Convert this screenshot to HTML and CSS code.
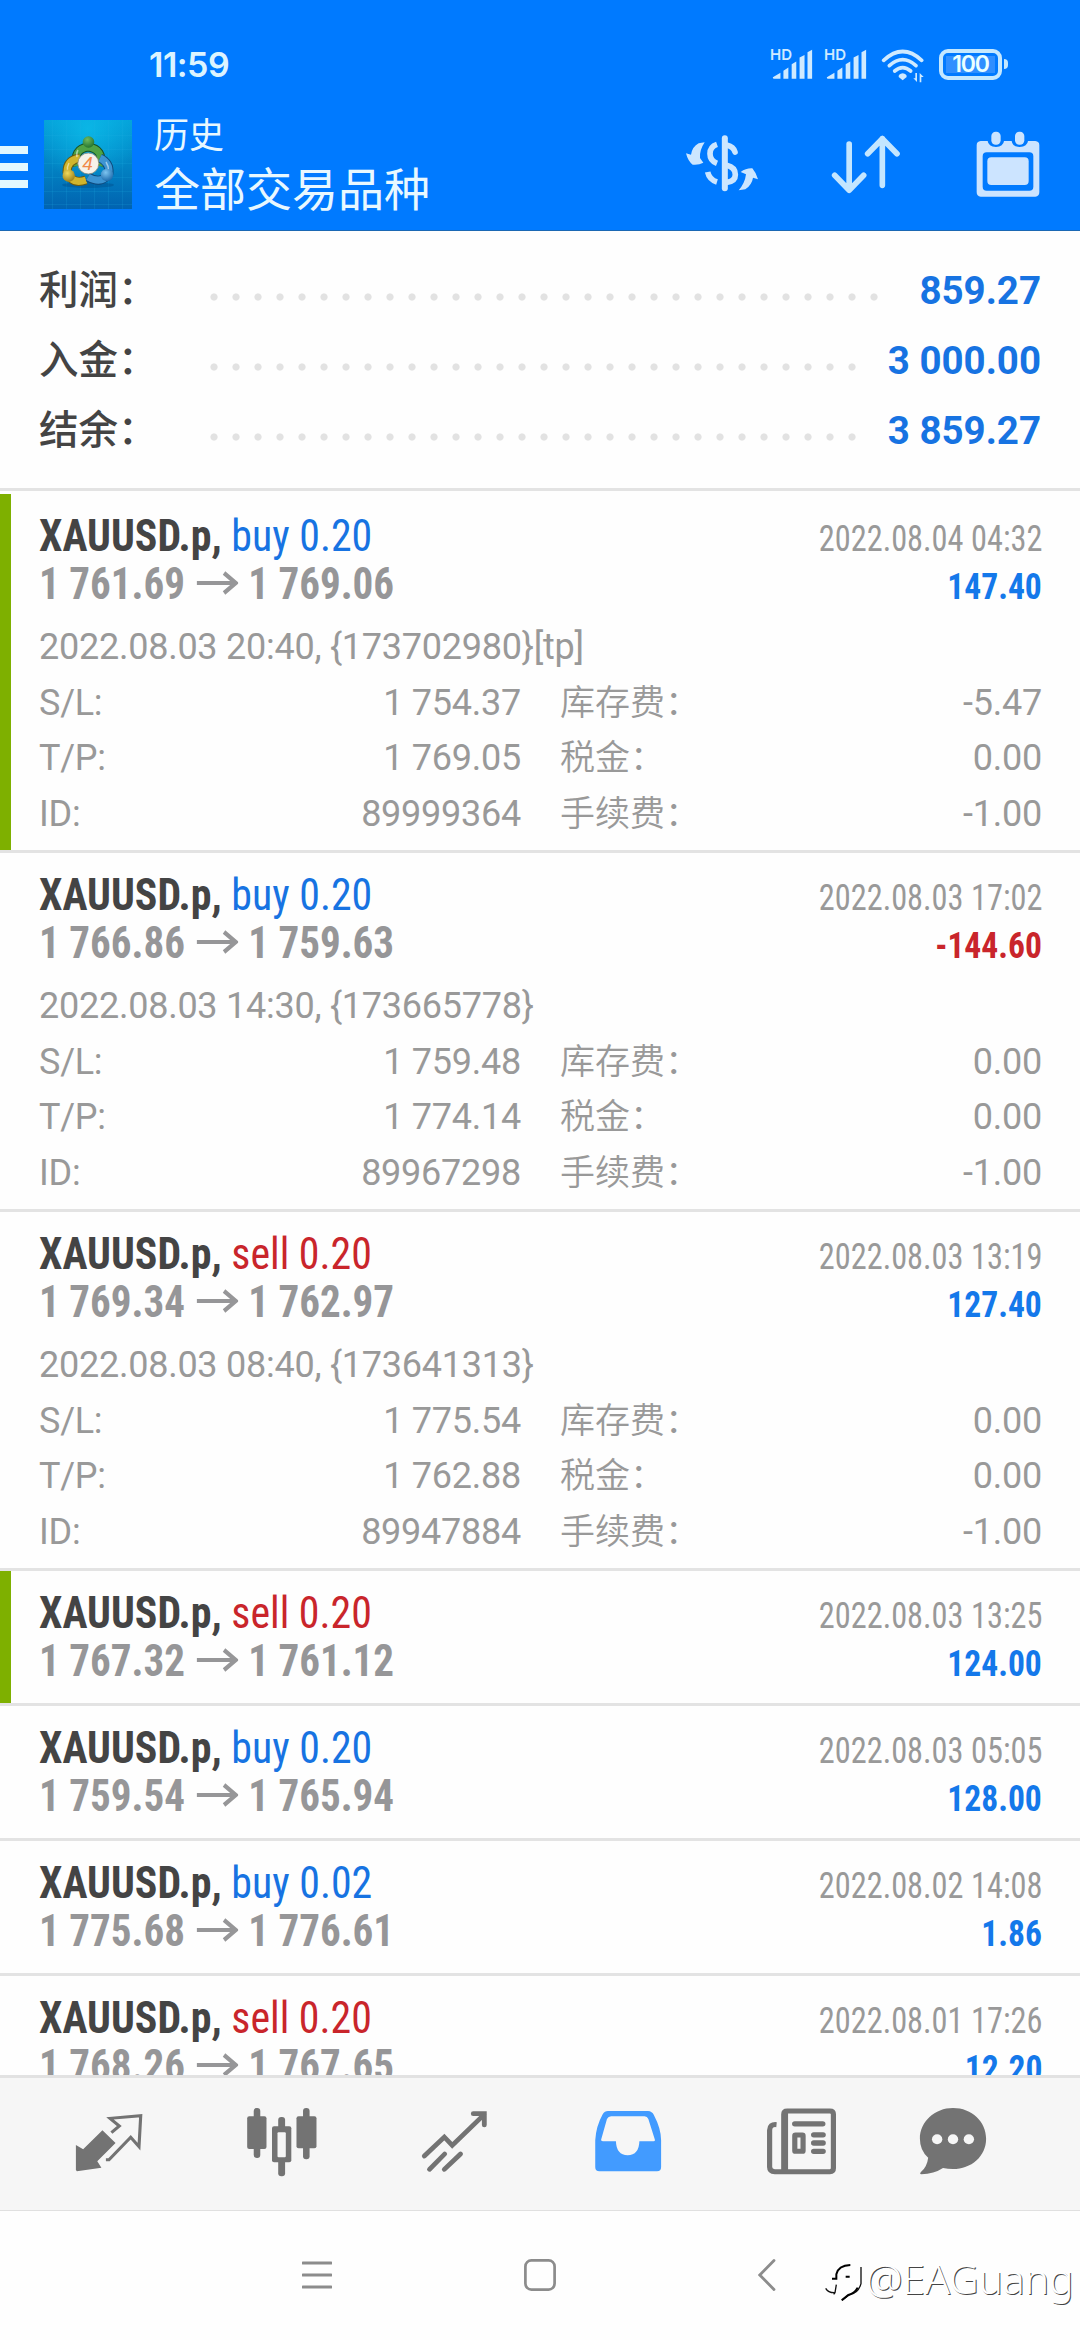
FILE: index.html
```html
<!DOCTYPE html>
<html lang="zh-CN">
<head>
<meta charset="utf-8">
<title>历史</title>
<link rel="stylesheet" href="styles.css">
</head>
<body>
<svg class="defs" width="0" height="0">
  <symbol id="arrow" viewBox="0 0 44 24" preserveAspectRatio="none"><path d="M0 12H41M29 2L41.500 12L29 22" fill="none" stroke="currentColor" stroke-width="4.200"/></symbol>
  <symbol id="signal" viewBox="0 0 126 94">
    <path d="M5 86L28 72V90H8Q4 90 5 86ZM37 66L52 56V90H37ZM62 46L76 38V90H62ZM86 26L101 18V90H86ZM110 10L124 2V90H110Z" fill="#cfeaff"/>
  </symbol>
</svg>
<div class="screen">
  <header class="header">
    <div class="status">
      <span class="clock">11:59</span>
      <div class="status-icons">
        <div class="sim"><span>HD</span><svg width="42" height="31"><use href="#signal"/></svg></div>
        <div class="sim"><span>HD</span><svg width="42" height="31"><use href="#signal"/></svg></div>
        <svg class="wifi" width="44" height="36" viewBox="718 82 132 108">
          <g fill="none" stroke="#cfeaff" stroke-width="11" stroke-linecap="round"><path d="M726 119Q783 66 840 119"/><path d="M743 135Q783 99 823 135"/><path d="M759 151Q783 131 807 151"/></g>
          <path d="M771 169Q770 160 783 158Q796 160 795 169L783 179Z" fill="#cfeaff"/>
          <path d="M826 157V184L815 173H821V157ZM834 185V157L846 169H839V185Z" fill="#cfeaff"/>
        </svg>
        <div class="battery"><span>100</span></div>
      </div>
    </div>
    <div class="toolbar">
      <div class="burger"><i></i><i></i><i></i></div>
      <svg class="logo" width="88" height="89" viewBox="0 0 88 89">
        <defs>
          <linearGradient id="lb" x1="0" y1="0" x2="0" y2="1"><stop offset="0" stop-color="#04a0d8"/><stop offset=".5" stop-color="#0284c4"/><stop offset="1" stop-color="#0163b0"/></linearGradient>
          <radialGradient id="lglow" cx=".5" cy=".1" r=".6"><stop offset="0" stop-color="#0cbcea" stop-opacity=".8"/><stop offset="1" stop-color="#0cbcea" stop-opacity="0"/></radialGradient>
          <radialGradient id="gg" cx=".4" cy=".3" r=".8"><stop offset="0" stop-color="#6fba62"/><stop offset="1" stop-color="#1a6b28"/></radialGradient>
          <radialGradient id="gy" cx=".4" cy=".3" r=".8"><stop offset="0" stop-color="#efd95c"/><stop offset="1" stop-color="#8f7410"/></radialGradient>
          <radialGradient id="gb" cx=".4" cy=".3" r=".8"><stop offset="0" stop-color="#7cc4f0"/><stop offset="1" stop-color="#1260a4"/></radialGradient>
        </defs>
        <rect width="88" height="89" fill="url(#lb)"/><rect width="88" height="89" fill="url(#lglow)"/>
        <path d="M8.500 0V89M22.500 0V89M36.500 0V89M50.500 0V89M64.500 0V89M78.500 0V89M0 15.500H88M0 29.500H88M0 43.500H88M0 57.500H88M0 71.500H88M0 84.500H88" stroke="#27b3e6" stroke-opacity=".16"/>
        <ellipse cx="44" cy="65" rx="26" ry="3" fill="#014a86" opacity=".4"/>
        <g fill="none" stroke-width="9">
          <path d="M33 46Q29 29 44 27Q60 29 56 46" stroke="#194f22"/><path d="M33 46Q29 29 44 27Q60 29 56 46" stroke="#4fa345" stroke-width="7"/>
          <path d="M36 38Q23 40 23 52Q28 65 42 60" stroke="#6c5b10"/><path d="M36 38Q23 40 23 52Q28 65 42 60" stroke="#d0b52d" stroke-width="7"/>
          <path d="M56 38Q66 43 65 53Q58 65 44 57" stroke="#104a7c"/><path d="M56 38Q66 43 65 53Q58 65 44 57" stroke="#3d94d2" stroke-width="7"/>
          <path d="M25 43Q21 50 27 58M34 30Q32 33 33 37M62 42Q68 51 60 60" stroke="#fff" stroke-opacity=".5" stroke-width="1.500"/>
        </g>
        <circle cx="44.500" cy="22" r="5.800" fill="url(#gg)"/><circle cx="24.700" cy="55.700" r="6.200" fill="url(#gy)"/><circle cx="63" cy="55" r="6.200" fill="url(#gb)"/>
        <circle cx="44.300" cy="43.500" r="10.500" fill="#f6f2ea" stroke="#8b8d7c" stroke-width=".8"/>
        <text x="43.500" y="50" text-anchor="middle" class="logo-num">4</text>
      </svg>
      <div class="titles"><div class="t1">历史</div><div class="t2">全部交易品种</div></div>
      <svg class="act-cur" width="76" height="60" viewBox="132 342 228 180">
        <g fill="none" stroke="#cce6ff" stroke-linecap="round"><path d="M254.500 355V505" stroke-width="18"/>
        <g stroke-width="17" stroke-linecap="butt"><path d="M231 373Q210 380 210 401Q210 422 231 430"/><path d="M231 486Q208 479 203 456" /><path d="M262 376Q280 380 285 396" stroke-linecap="round"/><path d="M260 436Q286 442 286 464Q286 484 260 487"/></g></g>
        <path d="M194 367L176 370Q157 380 153 404L138 400Q144 424 158 434Q176 436 190 428L180 414Q178 391 194 367ZM296 511L316 508Q336 494 339 473L354 478Q349 459 337 445Q318 444 302 456L318 463Q315 489 296 511Z" fill="#cce6ff"/>
      </svg>
      <svg class="act-sort" width="72" height="60" viewBox="568 342 216 180"><path d="M625.500 372V510M582 466L625.500 511L669 466M725 496V356M681 401L725 356L769 401" fill="none" stroke="#c4e6ff" stroke-width="17" stroke-linecap="round" stroke-linejoin="round"/></svg>
      <svg class="act-cal" width="66" height="68" viewBox="1005 330 198 204">
        <path fill="#cce4ff" fill-rule="evenodd" d="M1022 363H1043Q1045 380 1068 381Q1090 380 1092 363H1115Q1117 380 1139 381Q1162 380 1164 363H1186Q1198 364 1198 376V516Q1198 529 1186 530H1022Q1010 529 1010 516V376Q1010 364 1022 363ZM1040 397Q1028 397 1028 409V500Q1028 512 1040 512H1168Q1180 512 1180 500V409Q1180 397 1168 397Z"/>
        <rect x="1042" y="412" width="124" height="83" rx="12" fill="#cce4ff"/><rect x="1054" y="335" width="28" height="39" rx="13" fill="#cce4ff"/><rect x="1125" y="335" width="28" height="39" rx="13" fill="#cce4ff"/>
      </svg>
    </div>
  </header>

  <section class="summary">
    <div class="sum"><b>利润：</b><i></i><strong>859.27</strong></div>
    <div class="sum"><b>入金：</b><i></i><strong>3 000.00</strong></div>
    <div class="sum"><b>结余：</b><i></i><strong>3 859.27</strong></div>
  </section>

  <main class="list">
    <article class="deal marked">
      <div class="row"><h3><b>XAUUSD.p, </b><span class="buy">buy 0.20</span></h3><time>2022.08.04 04:32</time></div>
      <div class="row"><div class="price"><span>1 761.69</span><svg><use href="#arrow"/></svg><span>1 769.06</span></div><em class="profit">147.40</em></div>
      <div class="details"><p>2022.08.03 20:40, {173702980}[tp]</p>
        <span>S/L:</span><span>1 754.37</span><span>库存费：</span><span>-5.47</span>
        <span>T/P:</span><span>1 769.05</span><span>税金：</span><span>0.00</span>
        <span>ID:</span><span>89999364</span><span>手续费：</span><span>-1.00</span></div>
    </article>
    <article class="deal">
      <div class="row"><h3><b>XAUUSD.p, </b><span class="buy">buy 0.20</span></h3><time>2022.08.03 17:02</time></div>
      <div class="row"><div class="price"><span>1 766.86</span><svg><use href="#arrow"/></svg><span>1 759.63</span></div><em class="profit loss">-144.60</em></div>
      <div class="details"><p>2022.08.03 14:30, {173665778}</p>
        <span>S/L:</span><span>1 759.48</span><span>库存费：</span><span>0.00</span>
        <span>T/P:</span><span>1 774.14</span><span>税金：</span><span>0.00</span>
        <span>ID:</span><span>89967298</span><span>手续费：</span><span>-1.00</span></div>
    </article>
    <article class="deal">
      <div class="row"><h3><b>XAUUSD.p, </b><span class="sell">sell 0.20</span></h3><time>2022.08.03 13:19</time></div>
      <div class="row"><div class="price"><span>1 769.34</span><svg><use href="#arrow"/></svg><span>1 762.97</span></div><em class="profit">127.40</em></div>
      <div class="details"><p>2022.08.03 08:40, {173641313}</p>
        <span>S/L:</span><span>1 775.54</span><span>库存费：</span><span>0.00</span>
        <span>T/P:</span><span>1 762.88</span><span>税金：</span><span>0.00</span>
        <span>ID:</span><span>89947884</span><span>手续费：</span><span>-1.00</span></div>
    </article>
    <article class="deal marked">
      <div class="row"><h3><b>XAUUSD.p, </b><span class="sell">sell 0.20</span></h3><time>2022.08.03 13:25</time></div>
      <div class="row"><div class="price"><span>1 767.32</span><svg><use href="#arrow"/></svg><span>1 761.12</span></div><em class="profit">124.00</em></div>
    </article>
    <article class="deal">
      <div class="row"><h3><b>XAUUSD.p, </b><span class="buy">buy 0.20</span></h3><time>2022.08.03 05:05</time></div>
      <div class="row"><div class="price"><span>1 759.54</span><svg><use href="#arrow"/></svg><span>1 765.94</span></div><em class="profit">128.00</em></div>
    </article>
    <article class="deal">
      <div class="row"><h3><b>XAUUSD.p, </b><span class="buy">buy 0.02</span></h3><time>2022.08.02 14:08</time></div>
      <div class="row"><div class="price"><span>1 775.68</span><svg><use href="#arrow"/></svg><span>1 776.61</span></div><em class="profit">1.86</em></div>
    </article>
    <article class="deal">
      <div class="row"><h3><b>XAUUSD.p, </b><span class="sell">sell 0.20</span></h3><time>2022.08.01 17:26</time></div>
      <div class="row"><div class="price"><span>1 768.26</span><svg><use href="#arrow"/></svg><span>1 767.65</span></div><em class="profit">12.20</em></div>
    </article>
  </main>

  <nav class="tabs">
    <svg viewBox="199 110 232 270" preserveAspectRatio="none">
      <path d="M296 210L334 248L281 303L293 322L222 333L219 329V254L240 267Z" fill="#737373"/>
      <path d="M322 217L345 197L318 174L407 166L402 259L378 231L315 298H306" fill="none" stroke="#737373" stroke-width="9"/>
    </svg>
    <svg viewBox="701 110 232 270" preserveAspectRatio="none">
      <g fill="#737373"><rect x="716" y="168" width="56" height="98" rx="6"/><rect x="735" y="143" width="19" height="150" rx="9"/><rect x="859" y="168" width="58" height="96" rx="6"/><rect x="878" y="143" width="19" height="154" rx="9"/><rect x="806" y="170" width="20" height="178" rx="9"/><rect x="788" y="198" width="56" height="108" rx="6"/></g><rect x="804" y="216" width="24" height="75" rx="3" fill="#f6f6f6"/>
    </svg>
    <svg viewBox="1204 110 232 270" preserveAspectRatio="none"><path d="M1231 287L1289 230L1312 255L1405 162M1373 160H1405V194M1246 327L1290 281M1289 327L1336 281" fill="none" stroke="#737373" stroke-width="14" stroke-linecap="round"/></svg>
    <svg viewBox="138 110 232 270" preserveAspectRatio="none"><path fill-rule="evenodd" fill="#429bff" d="M196 152H312Q324 153 329 164Q350 205 350 240V320Q350 333 338 333H171Q159 333 159 320V240Q161 198 181 161Q186 152 196 152ZM205 168Q197 168 193 176L176 238Q176 243 182 243H219Q220 284 253 285Q286 284 287 243H328Q333 243 332 238L313 176Q310 168 302 168Z"/></svg>
    <svg viewBox="640 110 232 270" preserveAspectRatio="none">
      <path d="M711 148V335M685 193Q665 191 665 210V320Q665 334 680 334H840Q850 334 850 324V162Q850 152 840 152H716Q706 152 706 162V334" fill="none" stroke="#737373" stroke-width="15"/>
      <path d="M738 190.500H819M793 223.500H820M793 248H820M793 273H820" stroke="#737373" stroke-width="16" stroke-linecap="round"/><rect x="738" y="224" width="24" height="49" fill="none" stroke="#737373" stroke-width="15" rx="2"/>
    </svg>
    <svg viewBox="1083 110 232 270" preserveAspectRatio="none"><path d="M1199 143C1254 143 1295 184 1295 235C1295 288 1252 326 1199 326Q1184 326 1170 323Q1144 341 1107 342Q1101 341 1106 335Q1124 319 1127 292Q1103 270 1103 235C1103 184 1146 143 1199 143Z" fill="#737373"/><g fill="#f6f6f6"><circle cx="1153" cy="236.500" r="15"/><circle cx="1199" cy="236.500" r="15"/><circle cx="1245" cy="236.500" r="15"/></g></svg>
  </nav>

  <footer class="sysnav">
    <svg class="recents" width="30" height="32" viewBox="0 0 30 32"><path d="M1 4H29M1 16H29M1 28H29" stroke="#8c8c8c" stroke-width="3" stroke-linecap="round"/></svg>
    <svg class="home" width="32" height="32" viewBox="0 0 32 32"><rect x="1.400" y="1.400" width="29.200" height="29.200" rx="6" fill="none" stroke="#8c8c8c" stroke-width="2.700"/></svg>
    <svg class="back" width="18" height="32" viewBox="0 0 18 32"><path d="M16 1.500L1.800 16L16 30.500" fill="none" stroke="#8c8c8c" stroke-width="2.800" stroke-linecap="round"/></svg>
    <div class="watermark">
      <svg width="38" height="40" viewBox="16 42 114 120">
        <path d="M37 95H50V82Q56 55 92 54M78 89H90" fill="none" stroke="#000" stroke-width="6"/>
        <path d="M18 124Q26 138 46 137L50 113M46 137L42 142M124 60V110Q116 139 88 144L68 159" fill="none" stroke="#111" stroke-width="4"/>
        <path d="M114 122Q106 138 86 144L66 160" fill="none" stroke="#000" stroke-width="6"/>
      </svg>
      <span>@EAGuang</span>
    </div>
  </footer>
</div>
</body>
</html>
```
FILE: styles.css
```css
* { box-sizing: border-box; margin: 0; padding: 0; }
body { width: 1080px; height: 2340px; overflow: hidden; background: #fefefe; font-family: Roboto, "Noto Sans CJK SC", sans-serif; }
svg { display: block; flex: none; }
.defs { position: absolute; }
.screen { width: 1080px; height: 2340px; display: flex; flex-direction: column; }

.header { height: 231px; flex: none; background: #007aff; border-bottom: 1px solid #1b68b4; color: #e8f8ff; }
.status { height: 97px; padding: 32px 78px 0 149px; display: flex; justify-content: space-between; }
.clock { font: 600 34px/65px Inter, sans-serif; letter-spacing: -.5px; color: #dcf4ff; }
.status-icons { display: flex; align-items: flex-start; padding-top: 16px; }
.sim { width: 42px; height: 34px; margin-right: 12px; position: relative; }
.sim svg { margin-top: 1px; }
.sim span { position: absolute; left: -1px; top: -1px; font: 600 15px/15px Inter, sans-serif; color: #cfeaff; }
.wifi { margin-left: 2px; }
.battery { width: 63px; height: 31px; margin: 1px 0 0 14px; border: 4px solid #c4e8ff; border-radius: 9px; position: relative; padding: 3px; }
.battery span { display: block; height: 17px; background: #2f8fff; text-align: center; font: 600 23px/17px Inter, sans-serif; letter-spacing: -1.2px; color: #eaffff; }
.battery::after { content: ""; position: absolute; right: -10px; top: 6px; width: 4px; height: 10px; border-radius: 0 4px 4px 0; background: #c4e8ff; }

.toolbar { height: 134px; display: flex; align-items: center; }
.burger { width: 28px; display: grid; gap: 9px; padding-top: 5px; }
.burger i { height: 8px; background: #e2f8ff; }
.logo { margin-left: 16px; }
.logo-num { font: italic 19px "Liberation Sans", sans-serif; fill: #f08a4a; }
.titles { margin-left: 22px; width: 300px; font-family: "Noto Sans CJK SC", sans-serif; font-weight: 400; }
.t1 { font-size: 35px; line-height: 48px; }
.t2 { font-size: 46px; line-height: 58px; padding-bottom: 4px; }
.act-cur { margin-left: 230px; }
.act-sort { margin-left: 70px; }
.act-cal { margin-left: 73px; }

.summary { height: 260px; flex: none; padding: 23px 39px 0; border-bottom: 3px solid #e3e3e3; }
.sum { display: flex; height: 70px; align-items: center; }
.sum b { width: 164px; margin-top: -5px; font-size: 39.500px; font-weight: 500; color: #444; white-space: nowrap; }
.sum i { flex: 1; height: 8px; margin: 15px 30px 0 0; background: radial-gradient(circle at 11px 4px, #e2e2e2 3.200px, transparent 4px) 0 0 / 22px 8px repeat-x; }
.sum strong { margin-top: 2px; font-size: 38.500px; font-weight: 700; color: #1773e2; }

.list { height: 1584px; flex: none; overflow: hidden; padding-top: 3px; }
.deal { padding: 19px 38px 17px 39px; border-bottom: 3px solid #e3e3e3; }
.marked { background: linear-gradient(#7eb000, #7eb000) 0 0 / 11px 100% no-repeat; }
.row { height: 48px; display: flex; justify-content: space-between; line-height: 48px; white-space: nowrap; font-family: "Roboto Condensed", Roboto, sans-serif; font-stretch: 75%; }
.row h3 { font-size: 43.500px; font-weight: 400; white-space: pre; transform: scaleX(.962); transform-origin: left; }
.row h3 b { color: #444; font-weight: 700; }
.buy { color: #1773e2; }
.sell { color: #c9252b; }
.price { display: flex; align-items: center; font-size: 43.500px; font-weight: 700; color: #969698; transform: scaleX(.944); transform-origin: left; }
.price svg { width: 44px; height: 24px; margin: 0 11px 4px 12px; }
.row time { font-size: 36.500px; line-height: 52px; color: #999; transform: scaleX(.886); transform-origin: right; }
.profit { font: normal 700 36.500px/52px "Roboto Condensed", Roboto, sans-serif; font-stretch: 75%; color: #1478ea; transform: scaleX(.92); transform-origin: right; }
.loss { color: #c9252b; }
.details { margin: 11px 0 -9px; display: grid; grid-template-columns: 140px 342px 130px 1fr; grid-auto-rows: 55.500px; line-height: 55.500px; font-size: 36px; letter-spacing: -.25px; color: #999; white-space: nowrap; }
.details p { grid-column: 1 / -1; }
.details span:nth-of-type(even) { text-align: right; }
.details span:nth-of-type(4n + 3) { padding-left: 39px; font-size: 35px; letter-spacing: 0; font-weight: 350; }

.tabs { height: 136px; flex: none; background: #f6f6f6; border-top: 3px solid #e2e2e2; border-bottom: 1px solid #e0e0e0; padding: 19px 0 0 22px; display: grid; grid-template-columns: repeat(5, 173px) 132px; justify-items: center; }
.tabs svg { width: 80px; height: 90px; }

.sysnav { flex: 1; display: flex; align-items: flex-start; padding-top: 48px; }
.recents { margin-left: 302px; }
.home { margin-left: 192px; }
.back { margin-left: 202px; }
.watermark { display: flex; margin: 4px 0 0 49px; height: 44px; }
.watermark svg { margin-top: -2px; }
.watermark span { margin: -7px 0 0 3px; font: 300 41px/44px "Noto Sans", sans-serif; letter-spacing: -.1px; color: #fff; text-shadow: 1px 1px 0 #444; }
```
